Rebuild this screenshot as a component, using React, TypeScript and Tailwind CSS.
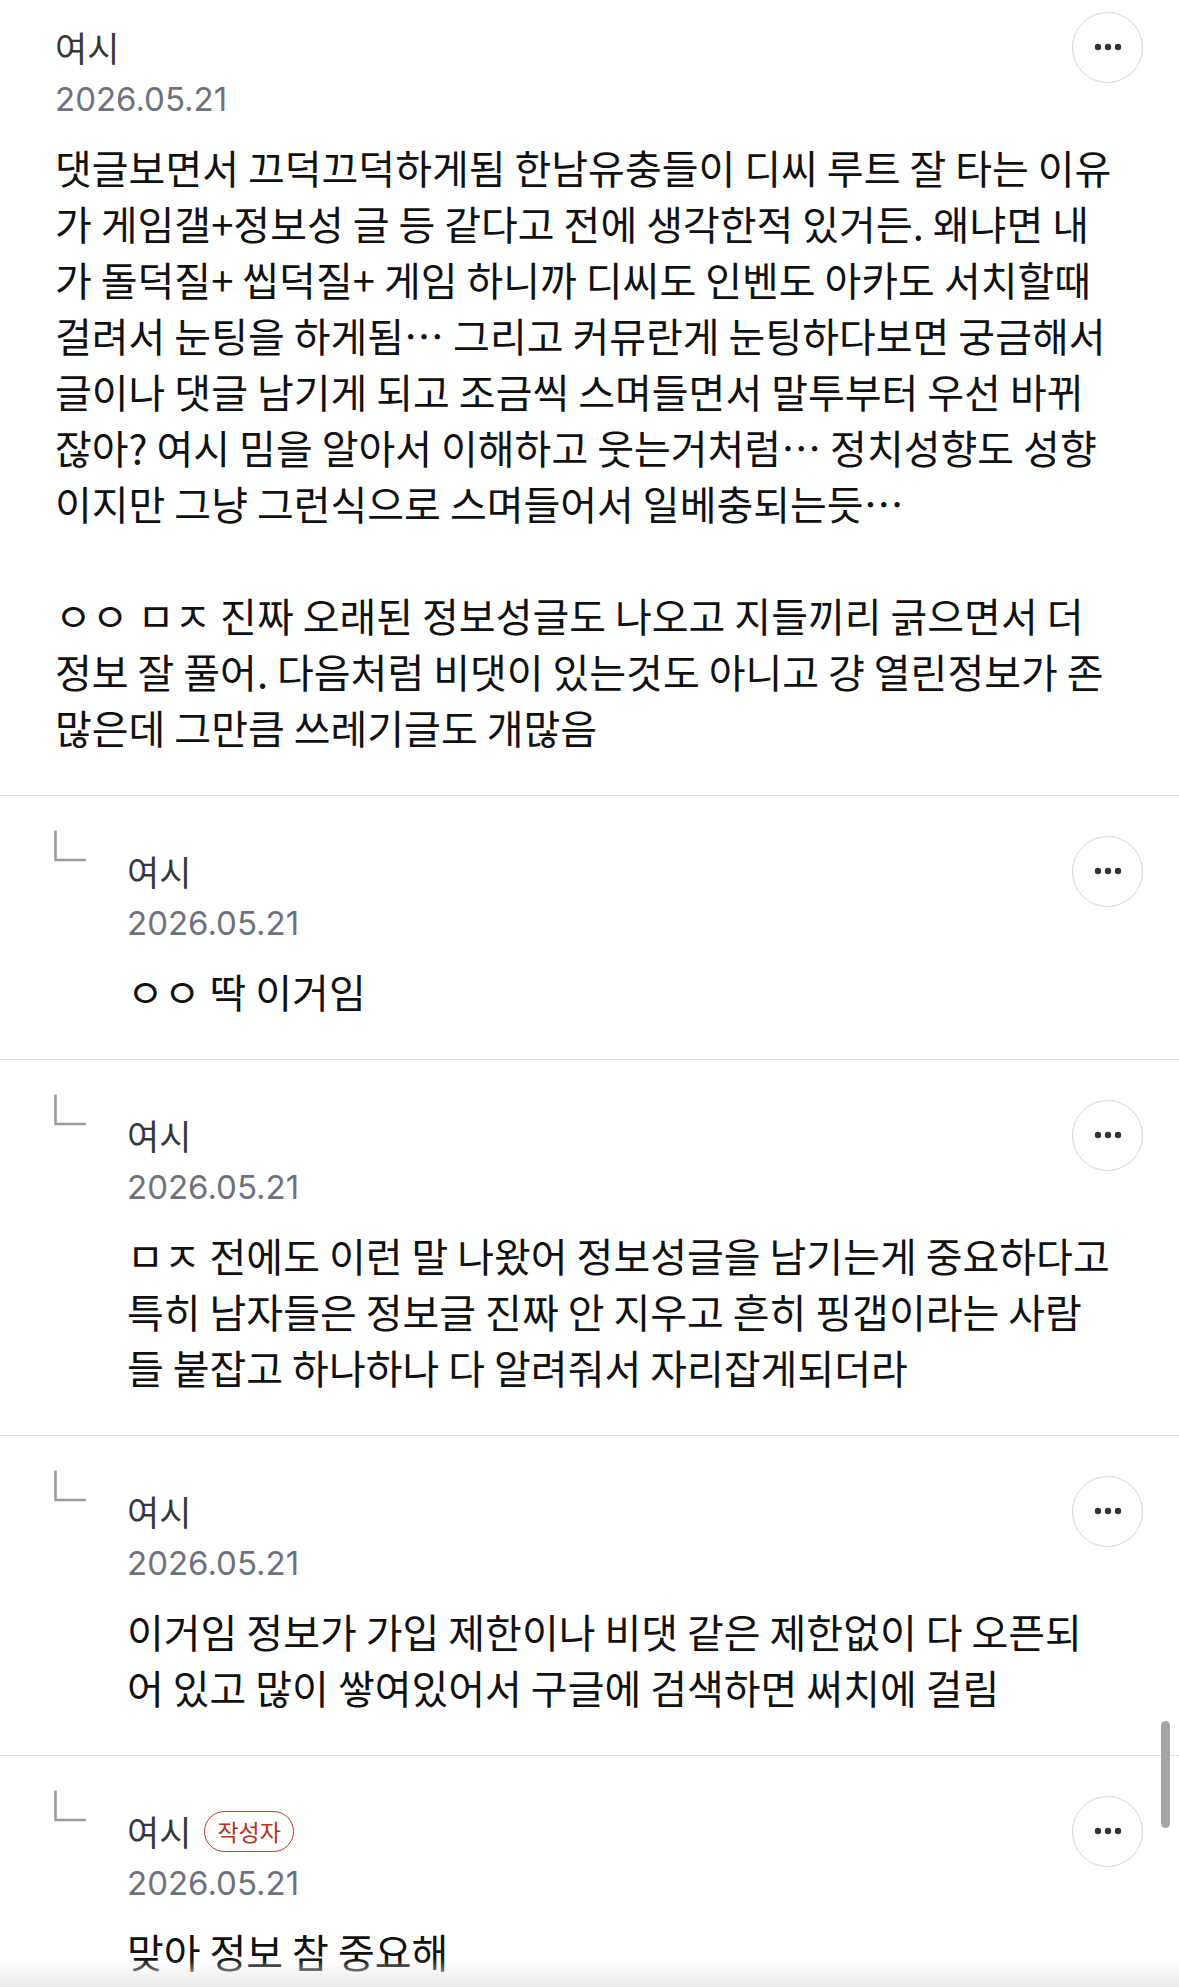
const comments = [
  {
    reply: false,
    writer: false,
    lines: [
      "댓글보면서 끄덕끄덕하게됨 한남유충들이 디씨 루트 잘 타는 이유",
      "가 게임갤+정보성 글 등 같다고 전에 생각한적 있거든. 왜냐면 내",
      "가 돌덕질+ 씹덕질+ 게임 하니까 디씨도 인벤도 아카도 서치할때",
      "걸려서 눈팅을 하게됨… 그리고 커뮤란게 눈팅하다보면 궁금해서",
      "글이나 댓글 남기게 되고 조금씩 스며들면서 말투부터 우선 바뀌",
      "잖아? 여시 밈을 알아서 이해하고 웃는거처럼… 정치성향도 성향",
      "이지만 그냥 그런식으로 스며들어서 일베충되는듯…",
      "",
      "ㅇㅇ ㅁㅈ 진짜 오래된 정보성글도 나오고 지들끼리 긁으면서 더",
      "정보 잘 풀어. 다음처럼 비댓이 있는것도 아니고 걍 열린정보가 존",
      "많은데 그만큼 쓰레기글도 개많음",
    ],
  },
  { reply: true, writer: false, lines: ["ㅇㅇ 딱 이거임"] },
  {
    reply: true,
    writer: false,
    lines: [
      "ㅁㅈ 전에도 이런 말 나왔어 정보성글을 남기는게 중요하다고",
      "특히 남자들은 정보글 진짜 안 지우고 흔히 핑갭이라는 사람",
      "들 붙잡고 하나하나 다 알려줘서 자리잡게되더라",
    ],
  },
  {
    reply: true,
    writer: false,
    lines: [
      "이거임 정보가 가입 제한이나 비댓 같은 제한없이 다 오픈되",
      "어 있고 많이 쌓여있어서 구글에 검색하면 써치에 걸림",
    ],
  },
  { reply: true, writer: true, lines: ["맞아 정보 참 중요해"] },
];

function MoreButton() {
  return (
    <button className="w-[71px] h-[71px] -my-[11px] shrink-0 rounded-full border-[1.5px] border-[#d6d6d6] bg-white flex items-center justify-center">
      <svg width="28" height="8" viewBox="0 0 28 8">
        <circle cx="4" cy="4" r="3.2" fill="#333" />
        <circle cx="14" cy="4" r="3.2" fill="#333" />
        <circle cx="24" cy="4" r="3.2" fill="#333" />
      </svg>
    </button>
  );
}

function CommentBody({ c }: { c: (typeof comments)[number] }) {
  return (
    <div className="flex-1 min-w-0">
      {/* header: nickname + menu */}
      <div className="h-[50px] flex items-center pr-[36px]">
        <span className="text-[35px] leading-[50px] text-[#383838]">여시</span>
        {c.writer && (
          <span className="ml-[13px] h-[41px] px-[12px] rounded-full border-[1.5px] border-[#c0392b] text-[#b83227] text-[23px] leading-none flex items-center">
            작성자
          </span>
        )}
        <div className="flex-1" />
        <MoreButton />
      </div>
      <div className="mt-[3px] font-['Inter','Noto_Sans_CJK_KR',sans-serif] text-[33px] leading-[48px] text-[#6f727d]">
        2026.05.21
      </div>
      <div className="mt-[16px] text-[40px] leading-[56px] text-[#111] whitespace-nowrap">
        {c.lines.map((l, i) => (
          <div key={i} className="h-[56px]">
            {l}
          </div>
        ))}
      </div>
    </div>
  );
}

export default function App() {
  return (
    <div className="relative w-[1179px] h-[1987px] overflow-hidden bg-white font-['Noto_Sans_CJK_KR','Noto_Sans',sans-serif]">
      {comments.map((c, i) =>
        c.reply ? (
          <section key={i} className="flex pl-[54px] pt-[34px] pb-[40px] border-b border-[#dcdcdc]">
            {/* reply corner */}
            <svg width="32" height="32" viewBox="0 0 32 32" className="shrink-0">
              <path d="M1.5 1.5 V30 H31" fill="none" stroke="#9a9a9a" strokeWidth="2.5" strokeLinecap="round" />
            </svg>
            <div className="ml-[41px] pt-[16px] flex-1 min-w-0 flex">
              <CommentBody c={c} />
            </div>
          </section>
        ) : (
          <section key={i} className="flex pl-[55px] pt-[22px] pb-[40px] border-b border-[#dcdcdc]">
            <CommentBody c={c} />
          </section>
        )
      )}

      {/* scroll indicator */}
      <div className="absolute left-[1161px] top-[1721px] w-[9px] h-[107px] rounded-full bg-[#a5a5a5]" />
      {/* bottom fade */}
      <div className="absolute left-0 right-0 bottom-0 h-[28px] bg-gradient-to-b from-white/0 to-[#ebebeb]" />
    </div>
  );
}
